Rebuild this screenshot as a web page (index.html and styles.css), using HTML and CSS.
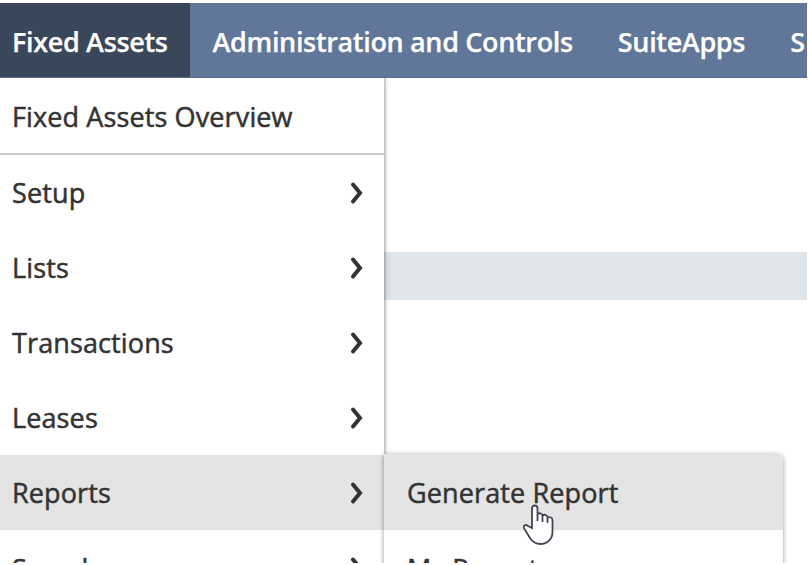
FILE: index.html
```
<!DOCTYPE html>
<html lang="en"><head><meta charset="utf-8"><title>Fixed Assets</title><link rel="stylesheet" href="styles.css"></head>
<body>
<div class="screen">
<nav class="bar"><a class="tab active"><span>Fixed Assets</span></a><a class="tab"><span>Administration and Controls</span></a><a class="tab"><span>SuiteApps</span></a><a class="tab"><span>S</span></a></nav>
<main class="page"><div class="band"></div></main>
<div class="menus">
<ul class="menu">
<li class="overview"><span>Fixed Assets Overview</span></li>
<li><span>Setup</span><svg viewBox="0 0 14 24"><path d="M3 3.500 10 12 3 20.500"/></svg></li>
<li><span>Lists</span><svg viewBox="0 0 14 24"><path d="M3 3.500 10 12 3 20.500"/></svg></li>
<li><span>Transactions</span><svg viewBox="0 0 14 24"><path d="M3 3.500 10 12 3 20.500"/></svg></li>
<li><span>Leases</span><svg viewBox="0 0 14 24"><path d="M3 3.500 10 12 3 20.500"/></svg></li>
<li class="hover"><span>Reports</span><svg viewBox="0 0 14 24"><path d="M3 3.500 10 12 3 20.500"/></svg></li>
<li><span>Searches</span><svg viewBox="0 0 14 24"><path d="M3 3.500 10 12 3 20.500"/></svg></li>
</ul>
<ul class="submenu"><li class="hover"><span>Generate Report</span></li><li><span>My Reports</span></li></ul>
</div>
<svg class="cursor" viewBox="0 0 32 42"><path d="M9 24V4.500c0-4 5.500-4 5.500 0V17V10c2-1.500 5-.5 5 2V18v-6.500c2-1.500 5-.5 5 2V19v-5.500c2.500-1 5 0 5 3V28c0 7-5 12-12 12-5 0-8-2-10.500-6L1.500 25c-2-3.500 1-5 3.500-3z"/></svg>
</div>
</body></html>
```
FILE: styles.css
```
* { box-sizing: border-box; }
body { margin: 0; background: #fff; font: 400 27px/36px "Open Sans", sans-serif; letter-spacing: .12px; color: #333; overflow: hidden; }
ul { list-style: none; margin: 0; padding: 0; }
.screen { position: relative; width: 808px; height: 565px; overflow: hidden; }
.bar { display: flex; height: 75px; margin-top: 3px; width: 807px; overflow: hidden; background: #607799; color: #fff; font-weight: 600; letter-spacing: -.34px; -webkit-text-stroke: .25px #fff; border-bottom: 1px solid #586e8f; }
.tab { flex: none; display: flex; align-items: center; padding: 3px 22.5px 0; white-space: nowrap; }
.active { width: 190px; padding-left: 12px; padding-right: 0; background: #3a475b; box-shadow: 0 1px #323e50; }
.page { padding-top: 174px; width: 807px; }
.band { height: 48px; background: #dfe4eb; }
.menus { position: absolute; top: 78px; left: 0; width: 807px; height: 485px; overflow: hidden; -webkit-text-stroke: .5px #333; }
.menu { width: 384px; height: 602px; background: #fff; box-shadow: 2px 0 rgba(0,0,0,.14), 3px 0 4px rgba(0,0,0,.1); }
li { height: 75px; display: flex; align-items: center; justify-content: space-between; padding: 0 20px 0 12px; }
li:last-child span { padding-top: 3px; }
.overview { height: 77px; padding-top: 2px; border-bottom: 2px solid #ccc; }
.hover { background: #e4e4e4; }
li svg { width: 14px; height: 24px; fill: none; stroke: #333; stroke-width: 4; stroke-linecap: round; }
.submenu { position: absolute; top: 376px; left: 384px; width: 399px; height: 160px; overflow: hidden; background: #fff; border-radius: 0 6px 0 0; box-shadow: 0 1px 5px rgba(0,0,0,.42); }
.submenu li { padding-left: 23px; }
.submenu li:first-child { height: 76px; padding-top: 1px; }
.cursor { position: absolute; left: 523px; top: 504px; width: 32px; height: 42px; fill: #fff; stroke: #445; stroke-width: 1.8; }
```
